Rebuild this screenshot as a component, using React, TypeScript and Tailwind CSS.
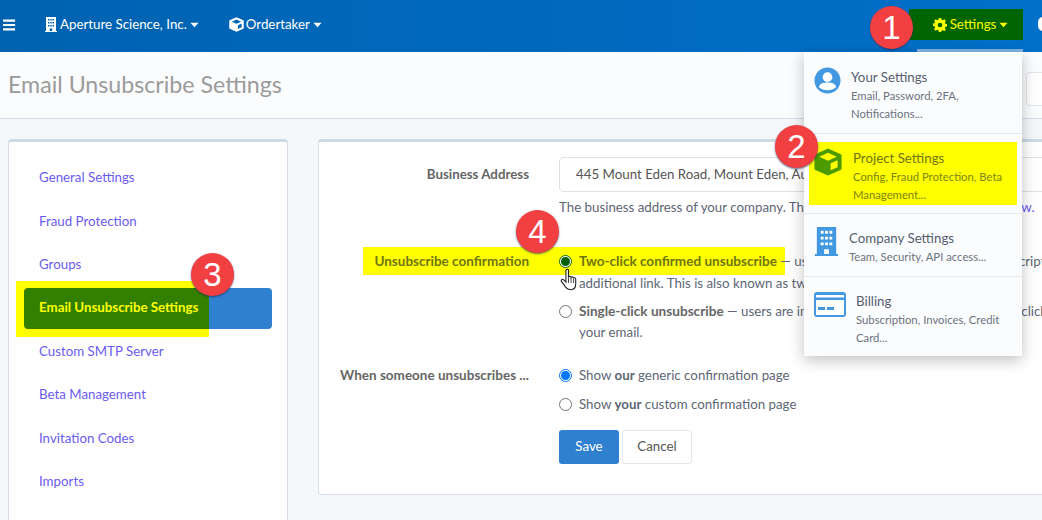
import React from "react";

const font = { fontFamily: '"Lato", "Noto Sans", sans-serif' };

function Badge({ n, className }: { n: string; className: string }) {
  return (
    <div className={`absolute z-30 flex h-[43px] w-[43px] items-center justify-center rounded-full bg-[#f13f42] text-[33px] leading-none text-white shadow-[0_1px_2px_rgba(30,40,90,0.7)] ${className}`} style={{ fontFamily: '"Liberation Sans", sans-serif' }}>
      {n}
    </div>
  );
}

function Caret({ color }: { color: string }) {
  return (
    <svg viewBox="0 0 10 6" width="9" height="6" className="ml-[3px]">
      <path d="M0.5 0.5h9L5 5.5z" fill={color} />
    </svg>
  );
}

function Building({ color, w, h }: { color: string; w: number; h: number }) {
  return (
    <svg viewBox="0 0 24 30" width={w} height={h}>
      <path fillRule="evenodd" fill={color} d="M2 0h20v28h2v2H0v-2h2zM6 4v3h3V4zm4.500 0v3h3V4zM15 4v3h3V4zM6 10v3h3v-3zm4.500 0v3h3v-3zM15 10v3h3v-3zM6 16v3h3v-3zm4.500 0v3h3v-3zM15 16v3h3v-3zM9.500 23v5h5v-5z" />
    </svg>
  );
}

function CubeIcon({ body, top, side, w, h }: { body: string; top: string; side: string; w: number; h: number }) {
  return (
    <svg viewBox="0 0 32 32" width={w} height={h}>
      <path d="M16 0.500 30.500 7a1.500 1.500 0 0 1 1 1.500v15a1.500 1.500 0 0 1-1 1.500L16 31.500 1.500 25a1.500 1.500 0 0 1-1-1.500v-15A1.500 1.500 0 0 1 1.500 7z" fill={body} />
      <path d="M16 5.500 26 10l-10 4.500L6 10z" fill={top} />
      <path d="M19 17.500l8-3.500v8l-8 3.500z" fill={side} />
    </svg>
  );
}

function NavItem({ children }: { children: React.ReactNode }) {
  return <div className="mb-[2px] flex h-[41.400px] items-center pl-[15px] text-[13.300px] text-[#6a5cf0]">{children}</div>;
}

function MenuItem({ icon, title, lines, iconBox, hl }: { icon: React.ReactNode; title: string; lines: string[]; iconBox: string; hl?: boolean }) {
  return (
    <div className="flex items-start">
      <div className={`shrink-0 ${iconBox}`}>{icon}</div>
      <div>
        <div className={`whitespace-nowrap text-[13.300px] leading-[20px] ${hl ? "text-[#6f7510]" : "text-[#555e6e]"}`}>{title}</div>
        {lines.map((l) => (
          <div key={l} className={`whitespace-nowrap text-[11.300px] leading-[18px] ${hl ? "text-[#7d8610]" : "text-[#6b7280]"}`}>{l}</div>
        ))}
      </div>
    </div>
  );
}

function Radio({ on, green }: { on?: boolean; green?: boolean }) {
  return (
    <span className={`flex h-[13px] w-[13px] shrink-0 items-center justify-center rounded-full border bg-white ${on ? (green ? "border-[#0a6a0a]" : "border-[#0075ff]") : "border-[#767676]"}`}>
      {on && <span className={`h-[9px] w-[9px] rounded-full ${green ? "bg-[#005f00]" : "bg-[#0075ff]"}`} />}
    </span>
  );
}

export default function App() {
  const side = ["General Settings", "Fraud Protection", "Groups"];
  const side2 = ["Custom SMTP Server", "Beta Management", "Invitation Codes", "Imports"];
  return (
    <div className="relative h-[520px] w-[1042px] overflow-hidden bg-[#f5f7fb] text-[13.300px] text-[#5d6675]" style={font}>
      {/* Header */}
      <header className="flex h-[52px] items-center bg-gradient-to-r from-[#0062b1] to-[#0070c9] pb-[3px] text-white">
        <svg viewBox="0 0 14 12" width="13" height="12" className="ml-[3px]">
          <path d="M0 0h13v2.400H0zM0 4.800h13v2.400H0zM0 9.600h13V12H0z" fill="#fff" />
        </svg>
        <div className="ml-[29px] flex items-center">
          <span className="mr-[3px]"><Building color="#fff" w={12} h={15} /></span>
          Aperture Science, Inc.
          <Caret color="#fff" />
        </div>
        <div className="ml-[30px] flex items-center">
          <span className="mr-[2px]"><CubeIcon body="#fff" top="#0066b8" side="#0066b8" w={15} h={15} /></span>
          Ordertaker
          <Caret color="#fff" />
        </div>
        <div className="ml-auto mr-[19px] flex h-[31px] w-[114px] items-center justify-center bg-[#006400] pl-[9px] text-[#ffff00]">
          <svg viewBox="0 0 24 24" width="14" height="14" className="mr-[3px]">
            <path fill="#ffff00" fillRule="evenodd" d="M10 0h4l.7 3.200 1.900.8 2.800-1.800 2.800 2.800-1.800 2.800.8 1.900 3.200.7v4l-3.200.7-.8 1.900 1.800 2.800-2.800 2.800-2.800-1.800-1.900.8L14 24h-4l-.7-3.200-1.900-.8-2.800 1.800-2.800-2.800 1.800-2.800-.8-1.900L-.4 13.600v-4l3.200-.7.8-1.900L1.800 5 4.600 2.200l2.800 1.800 1.900-.8zM12 8a4 4 0 1 0 0 8 4 4 0 0 0 0-8z" />
          </svg>
          Settings
          <Caret color="#ffff00" />
        </div>
      </header>
      <div className="absolute left-[917px] top-[49px] z-10 h-[3px] w-[106px] bg-[#7fb3e0]" />
      <div className="absolute right-[-6px] top-[17px] h-[14px] w-[10px] rounded-full bg-white" />

      {/* Title */}
      <div className="flex h-[67px] items-center border-b border-[#d5dde8] bg-[#fbfcfe] pl-[8px]">
        <h1 className="text-[23.200px] font-normal leading-none text-[#9b9b9b]">Email Unsubscribe Settings</h1>
      </div>
      <div className="absolute right-[-10px] top-[72px] h-[34px] w-[26px] rounded-[4px] border border-[#e3e6ec] bg-white" />

      {/* Body */}
      <div className="flex items-start pl-[8px] pt-[20px]">
        <aside className="h-[420px] w-[280px] shrink-0 rounded-[4px] border border-[#d5dde8] border-t-[3px] border-t-[#cfdbe2] bg-white px-[15px] pt-[15.600px]">
          {side.map((s) => <NavItem key={s}>{s}</NavItem>)}
          <div className="relative mb-[2px] h-[41.400px] rounded-[4px] bg-[#2f80cf]">
            <div className="absolute -left-[8px] -top-[7px] h-[56px] w-[193px] bg-[#ffff00]" />
            <div className="absolute left-0 top-0 flex h-full w-[185px] items-center rounded-l-[4px] bg-[#338000] pl-[15px] text-[13.300px] font-bold text-[#ffff00]">Email Unsubscribe Settings</div>
          </div>
          {side2.map((s) => <NavItem key={s}>{s}</NavItem>)}
        </aside>

        <main className="isolate ml-[30px] h-[356px] w-[760px] shrink-0 rounded-[4px] border border-[#d5dde8] border-t-[3px] border-t-[#cfdbe2] bg-white pt-[15px]">
          <div className="flex">
            <div className="mt-[8px] w-[210px] shrink-0 text-right font-bold text-[#666]">Business Address</div>
            <div className="ml-[30px] w-[510px]">
              <div className="flex h-[35px] items-center rounded-[4px] border border-[#dde1e7] pl-[16px] pt-[1px] text-[#555]">445 Mount Eden Road, Mount Eden, Auckland</div>
              <div className="mt-[5px] whitespace-nowrap leading-[21px]">The business address of your company. This appears in your email footer. <span className="text-[#6a5cf0]">Preview.</span></div>
            </div>
          </div>
          <div className="relative mt-[33px] flex">
            <div className="absolute left-[44px] -top-[4px] -z-10 h-[28px] w-[422px] bg-[#ffff00]" />
            <div className="w-[210px] shrink-0 text-right text-[13.500px] font-bold leading-[21px] text-[#6f7510]">Unsubscribe confirmation</div>
            <div className="ml-[30px] w-[510px]">
              <div className="flex items-start">
                <span className="mt-[4px]"><Radio on green /></span>
                <div className="ml-[7px] whitespace-nowrap leading-[21px]">
                  <div>
                    <span className="text-[13.550px] font-bold text-[#6f7510]">Two-click confirmed unsubscribe</span>
                    <span> — users are redirected to a page with description and</span>
                  </div>
                  <div className="mt-[1px]">additional link. This is also known as two-step unsubscribe.</div>
                </div>
              </div>
              <div className="mt-[7px] flex items-start">
                <span className="mt-[4px]"><Radio /></span>
                <div className="ml-[7px] whitespace-nowrap leading-[21px]">
                  <div><b className="text-[13.600px] text-[#666]">Single-click unsubscribe</b> — users are immediately unsubscribed when users click</div>
                  <div>your email.</div>
                </div>
              </div>
            </div>
          </div>
          <div className="mt-[22px] flex">
            <div className="w-[210px] shrink-0 text-right text-[13.500px] font-bold leading-[21px] text-[#666]">When someone unsubscribes ...</div>
            <div className="ml-[30px]">
              <div className="flex items-center leading-[21px]"><Radio on /><span className="ml-[7px]">Show <b>our</b> generic confirmation page</span></div>
              <div className="mt-[8px] flex items-center leading-[21px]"><Radio /><span className="ml-[7px]">Show <b>your</b> custom confirmation page</span></div>
              <div className="mt-[15px] flex gap-[3px]">
                <div className="flex h-[34px] w-[60px] items-center justify-center rounded-[3px] bg-[#2f80cf] text-white">Save</div>
                <div className="flex h-[34px] w-[70px] items-center justify-center rounded-[3px] border border-[#e3e6ec] text-[#555]">Cancel</div>
              </div>
            </div>
          </div>
        </main>
      </div>

      {/* Dropdown menu */}
      <div className="absolute left-[804px] top-[52px] z-20 w-[218px] bg-[#fbfcfe] shadow-[0_4px_14px_rgba(0,0,0,0.25)]">
        <div className="border-b border-[#e5e7eb] pb-[10px] pl-[10px] pt-[15px]">
          <MenuItem iconBox="w-[37px]" title="Your Settings" lines={["Email, Password, 2FA,", "Notifications..."]} icon={
            <svg viewBox="0 0 28 28" width="27" height="27"><circle cx="14" cy="14" r="13.500" fill="#4299e1" /><circle cx="14" cy="10.500" r="5" fill="#fff" /><path d="M5 21c1-4 4-5 9-5s8 1 9 5c-5 4-13 4-18 0z" fill="#fff" /></svg>
          } />
        </div>
        <div className="border-b border-[#e5e7eb] pb-[8px] pt-[8px]">
          <div className="mx-[5px] bg-[#ffff00] pb-[1px] pl-[5px] pt-[6px]">
            <MenuItem hl iconBox="w-[39px]" title="Project Settings" lines={["Config, Fraud Protection, Beta", "Management..."]} icon={
              <CubeIcon body="#4a9a00" top="#ffff00" side="#ffff00" w={28} h={28} />
            } />
          </div>
        </div>
        <div className="border-b border-[#e5e7eb] pb-[10px] pl-[10px] pt-[14px]">
          <MenuItem iconBox="-mt-[1px] w-[35px]" title="Company Settings" lines={["Team, Security, API access..."]} icon={<Building color="#4299e1" w={25} h={29} />} />
        </div>
        <div className="pb-[9px] pl-[10px] pt-[14px]">
          <MenuItem iconBox="mt-[1px] w-[42px]" title="Billing" lines={["Subscription, Invoices, Credit", "Card..."]} icon={
            <svg viewBox="0 0 32 25" width="32" height="25"><rect width="32" height="25" rx="3" fill="#4299e1" /><rect x="2" y="3" width="28" height="2.500" fill="#fff" /><rect x="2" y="8" width="28" height="15" fill="#fff" /><rect x="4" y="15" width="7" height="3" fill="#4299e1" /><rect x="13" y="15" width="7" height="3" fill="#4299e1" /></svg>
          } />
        </div>
      </div>

      <Badge n="1" className="left-[870px] top-[6px]" />
      <Badge n="2" className="left-[775px] top-[125px]" />
      <Badge n="3" className="left-[191px] top-[253px]" />
      <Badge n="4" className="left-[516px] top-[210px]" />

      {/* Cursor */}
      <svg viewBox="0 0 20 26" width="17" height="23" className="absolute left-[560px] top-[268px] z-30">
        <path d="M7 2c1-1.500 3-1.500 3 .5V10c1-1 2.500-1 3 .5 1-1 2.500-.5 3 .5 1-.5 2.500 0 2.500 2v5c0 4-2 7-6 7-4 0-6-2-8-6l-3-4c-.5-2 1.500-3 3-1.500l2.500 2.500z" fill="#fff" stroke="#222" strokeWidth="1.300" />
        <path d="M10 11v6M13 11v6M16 12v5" stroke="#222" strokeWidth="1" />
      </svg>
    </div>
  );
}
